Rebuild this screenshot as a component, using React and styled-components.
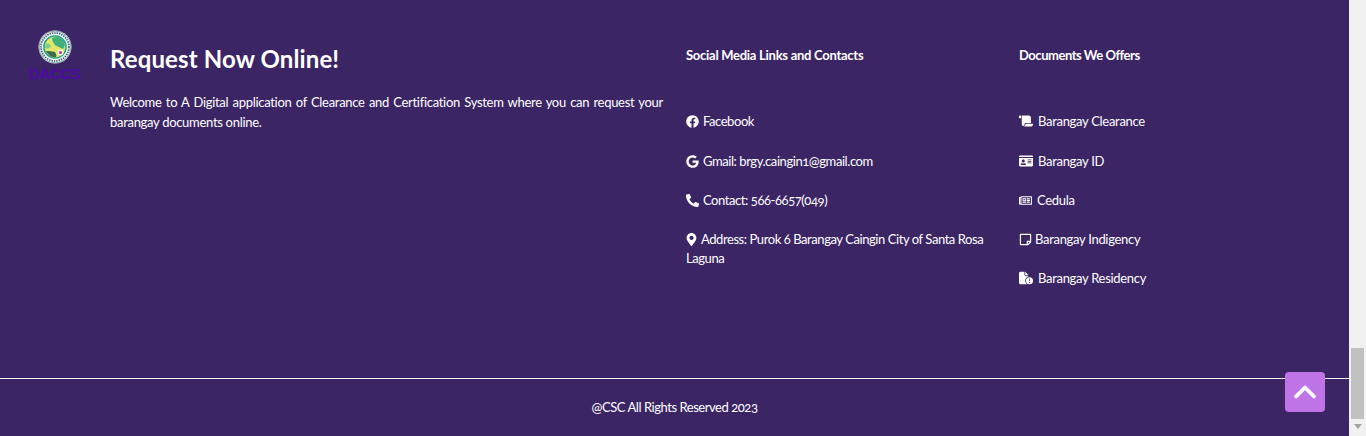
import React from 'react';
import styled, { createGlobalStyle } from 'styled-components';
import { ChevronUp } from 'lucide-react';
import {
  FaFacebook,
  FaGoogle,
  FaPhoneAlt,
  FaMapMarkerAlt,
  FaScroll,
  FaIdCard,
  FaRegNewspaper,
  FaRegStickyNote,
} from 'react-icons/fa';
import { FaFileCircleExclamation } from 'react-icons/fa6';

const GlobalStyle = createGlobalStyle`
  html, body {
    margin: 0;
    padding: 0;
    overflow: hidden;
  }
  body {
    font-family: Lato, "Open Sans", sans-serif;
    font-variant-numeric: oldstyle-nums;
    color: #fff;
  }
`;

const Page = styled.div`
  display: flex;
  height: 436px;
  overflow: hidden;
`;

const Footer = styled.footer`
  flex: 1;
  display: flex;
  flex-direction: column;
  background-color: #3c2565;
`;

const Columns = styled.div`
  flex: 1;
  display: grid;
  grid-template-columns: 87px 553px 310px 1fr;
  column-gap: 23px;
  padding-top: 30px;
`;

const Brand = styled.div`
  display: flex;
  flex-direction: column;
  align-items: center;
  padding-left: 23px;
`;

const BrandName = styled.span`
  font-family: "Liberation Sans", sans-serif;
  font-size: 14.5px;
  line-height: 14px;
  font-weight: 700;
  color: #4b0d9e;
  margin-top: 3px;
  -webkit-text-stroke: 0.4px #4b0d9e;
`;

const About = styled.div`
  padding-top: 14px;
`;

const Title = styled.h2`
  margin: 0 0 19px;
  font-size: 24px;
  line-height: 29px;
  font-weight: 700;
  letter-spacing: 0.12px;
`;

const Intro = styled.p`
  margin: 0;
  font-size: 13px;
  line-height: 20px;
  letter-spacing: -0.3px;
  text-align: justify;
`;

const LinkColumn = styled.div`
  padding-top: 17px;
`;

const ColumnTitle = styled.h3`
  margin: 0 0 48px;
  font-size: 13px;
  line-height: 17px;
  font-weight: 700;
  letter-spacing: ${({ $tight }) => $tight}px;
`;

const LinkList = styled.ul`
  margin: 0;
  padding: 0;
  list-style: none;
  display: flex;
  flex-direction: column;
  gap: 20px;
  letter-spacing: ${({ $tight }) => $tight}px;
`;

const LinkItem = styled.li`
  font-size: 13px;
  line-height: 19px;

  &:first-child {
    margin-bottom: 1px;
  }

  svg {
    vertical-align: -2px;
    margin-left: ${({ $shift }) => $shift || 0}px;
    margin-right: ${({ $gap }) => $gap}px;
  }
`;

const Bottom = styled.div`
  border-top: 1px solid #fff;
  height: 58px;
  display: flex;
  align-items: center;
  justify-content: center;
  font-size: 13px;
  letter-spacing: -0.45px;
  padding-bottom: 1px;
  box-sizing: border-box;
`;

const BackToTop = styled.button`
  position: absolute;
  left: 1285px;
  top: 372px;
  width: 40px;
  height: 40px;
  padding: 0;
  border: 0;
  border-radius: 4px;
  background-color: #bf74e8;
  color: #fff;
  display: flex;
  align-items: center;
  justify-content: center;
`;

const Scrollbar = styled.div`
  width: 17px;
  background-color: #f1f1f1;
  display: flex;
  flex-direction: column;
  align-items: center;
  justify-content: flex-end;
`;

const ScrollThumb = styled.div`
  width: 13px;
  height: 71px;
  background-color: #c1c1c1;
`;

const ScrollArrow = styled.div`
  width: 0;
  height: 0;
  margin: 5px 0 7px;
  border-left: 4px solid transparent;
  border-right: 4px solid transparent;
  border-top: 5px solid #a3a3a3;
`;

const Seal = () => (
  <svg width="34" height="34" viewBox="0 0 34 34">
    <circle cx="17" cy="17" r="16.5" fill="#eef3ee" />
    <circle cx="17" cy="17" r="16" fill="none" stroke="#4a6a78" strokeWidth="0.6" />
    <circle cx="17" cy="17" r="14" fill="none" stroke="#3b5f78" strokeWidth="1.6" strokeDasharray="1.4 1" />
    <circle cx="17" cy="17" r="11.8" fill="#19a08f" />
    <circle cx="17" cy="17" r="10.4" fill="#e3e66a" />
    <path d="M14 8c4-2 9-1 12 3 1 3 1 6-1 8-3-1-5-3-7-3-2-2-4-5-4-8z" fill="#3fb07a" />
    <path d="M8 14c2-1 4 0 5 2-1 2-3 3-6 2 0-1 0-3 1-4z" fill="#7ed08a" />
    <path d="M8 21c3 0 6 0 9 1 1 2 2 4 1 5-4 1-8-2-10-6z" fill="#3f6a4f" />
    <circle cx="22.5" cy="22.5" r="3" fill="#f4f4f4" />
    <circle cx="22.5" cy="22.5" r="1.5" fill="#c0405f" />
  </svg>
);

const contacts = [
  { icon: FaFacebook, text: 'Facebook', size: 13, gap: 4 },
  { icon: FaGoogle, text: 'Gmail: brgy.caingin1@gmail.com', size: 13, gap: 4 },
  { icon: FaPhoneAlt, text: 'Contact: 566-6657(049)', size: 13, gap: 4 },
  { icon: FaMapMarkerAlt, text: 'Address: Purok 6 Barangay Caingin City of Santa Rosa Laguna', size: 13, gap: 3, shift: -1 },
];

const documents = [
  { icon: FaScroll, text: 'Barangay Clearance', size: 14, gap: 5 },
  { icon: FaIdCard, text: 'Barangay ID', size: 14, gap: 5 },
  { icon: FaRegNewspaper, text: 'Cedula', size: 13, gap: 5 },
  { icon: FaRegStickyNote, text: 'Barangay Indigency', size: 13, gap: 3 },
  { icon: FaFileCircleExclamation, text: 'Barangay Residency', size: 14, gap: 5 },
];

const App = () => {
  return (
    <Page>
      <GlobalStyle />
      <Footer>
        <Columns>
          <Brand>
            <Seal />
            <BrandName>DACCS</BrandName>
          </Brand>
          <About>
            <Title>Request Now Online!</Title>
            <Intro>
              Welcome to A Digital application of Clearance and Certification System where you can request your barangay documents online.
            </Intro>
          </About>
          <LinkColumn>
            <ColumnTitle $tight={-0.27}>Social Media Links and Contacts</ColumnTitle>
            <LinkList $tight={-0.43}>
              {contacts.map(({ icon: Icon, text, size, gap, shift }) => (
                <LinkItem key={text} $gap={gap} $shift={shift}>
                  <Icon size={size} />
                  {text}
                </LinkItem>
              ))}
            </LinkList>
          </LinkColumn>
          <LinkColumn>
            <ColumnTitle $tight={-0.47}>Documents We Offers</ColumnTitle>
            <LinkList $tight={-0.3}>
              {documents.map(({ icon: Icon, text, size, gap }) => (
                <LinkItem key={text} $gap={gap}>
                  <Icon size={size} />
                  {text}
                </LinkItem>
              ))}
            </LinkList>
          </LinkColumn>
        </Columns>
        <Bottom>@CSC All Rights Reserved 2023</Bottom>
      </Footer>
      <Scrollbar>
        <ScrollThumb />
        <ScrollArrow />
      </Scrollbar>
      <BackToTop aria-label="Back to top">
        <ChevronUp size={36} strokeWidth={2.5} />
      </BackToTop>
    </Page>
  );
};

export default App;
